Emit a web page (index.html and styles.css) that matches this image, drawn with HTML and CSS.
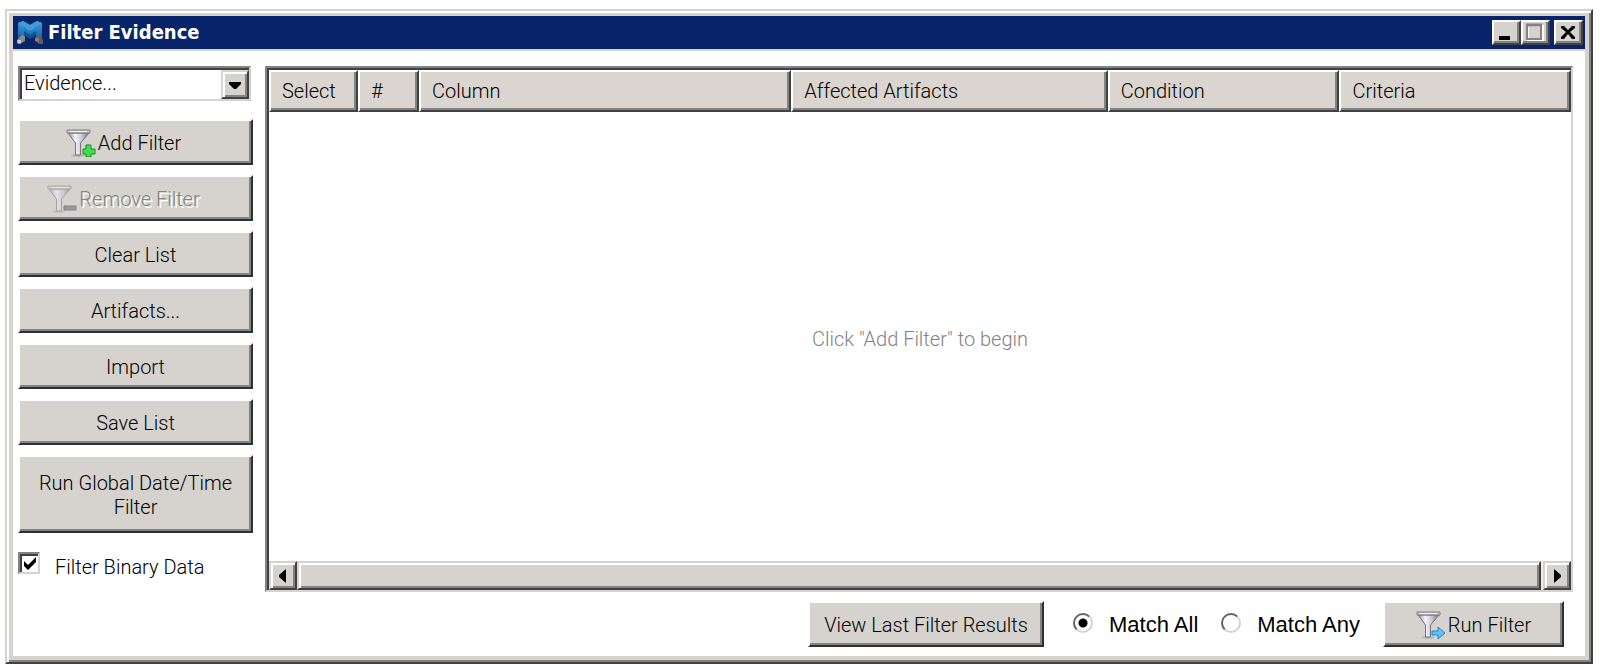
FILE: index.html
```html
<!DOCTYPE html>
<html lang="en">
<head>
<meta charset="utf-8">
<title>Filter Evidence</title>
<link rel="stylesheet" href="styles.css">
</head>
<body>
<svg class="defs" width="0" height="0" aria-hidden="true">
  <defs>
    <linearGradient id="metal" x1="0" x2="1" y1="0" y2="0">
      <stop offset="0" stop-color="#8e8c98"/><stop offset=".35" stop-color="#f6f5fb"/><stop offset=".65" stop-color="#c9c8d8"/><stop offset="1" stop-color="#77747c"/>
    </linearGradient>
    <linearGradient id="limb" x1="0" x2="0" y1="0" y2="1">
      <stop offset="0" stop-color="#3f9cda"/><stop offset=".65" stop-color="#1f74b5"/><stop offset="1" stop-color="#1a4f86"/>
    </linearGradient>
    <g id="funnel">
      <ellipse cx="12" cy="26.5" rx="7" ry="1.5" fill="#aaa7a5" opacity=".7"/>
      <path d="M2 4 9.500 14V26H14.500V14L23 4Z" fill="url(#metal)" stroke="#77737a" stroke-width="1"/>
      <path d="M1 1H24V4H1Z" fill="#c8c6cb" stroke="#827d7c" stroke-width="1"/>
      <path d="M4 2.5H21" stroke="#f4f3f6" stroke-width="1"/>
    </g>
  </defs>
</svg>
<main class="window">
  <header class="titlebar">
    <svg class="logo" viewBox="0 0 26 25" aria-hidden="true">
      <path d="M1 3 6 1 13 5 20 1 25 3V19L19 20V14L13 18 7 14V20L1 21Z" fill="url(#limb)"/>
      <path d="M1 3 6 1 13 5 20 1 25 3 13 11Z" fill="#429bd8"/>
      <path d="M7 11 13 15 19 11V15L13 19 7 15Z" fill="#145289"/>
      <path d="M0 20 5 15 8 16V21L3 24 0 23Z" fill="#8c8a88"/><path d="M0 20H4V23L1 24Z" fill="#d0ccc5"/>
      <path d="M18 17 23 15 26 20V24H22L18 21Z" fill="#5d5d62"/><path d="M18 18H22V22L18 21Z" fill="#7c7c80"/>
    </svg>
    <h1 class="title">Filter Evidence</h1>
    <div class="caption">
      <button class="cap" type="button" aria-label="Minimize"><svg viewBox="0 0 22 20"><path d="M5 14H16V18H5Z" fill="#000"/></svg></button>
      <button class="cap" type="button" aria-label="Maximize" disabled><svg viewBox="0 0 22 20"><path d="M5 4H20V18H5Z" fill="none" stroke="#fff" stroke-width="2"/><path d="M4 3H18V17H4Z" fill="none" stroke="#848284" stroke-width="2"/><path d="M3 3H19" stroke="#848284" stroke-width="3"/></svg></button>
      <button class="cap cap-close" type="button" aria-label="Close"><svg viewBox="0 0 22 20"><path d="M5 4H8L12 8 16 4H19V6L14 10 19 15V17H16L12 12 8 17H5V15L10 10 5 6Z" fill="#000"/></svg></button>
    </div>
  </header>
  <div class="content">
    <aside class="sidebar">
      <div class="combo">
        <select class="combo-field" aria-label="Evidence"><option>Evidence...</option></select>
        <span class="combo-arrow"><svg viewBox="0 0 14 8"><path d="M1 1H13V3L8 8H6L1 3Z" fill="#000"/></svg></span>
      </div>
      <button class="btn btn-side-icon" type="button"><svg class="icon" viewBox="0 0 30 28"><use href="#funnel"/><path d="M20 16H25V20H29V25H25V28H20V25H17V20H20Z" fill="#45dd50" stroke="#148c24" stroke-width="1"/></svg><span>Add Filter</span></button>
      <button class="btn btn-side-icon" type="button" disabled><svg class="icon" viewBox="0 0 30 28"><g opacity=".5"><use href="#funnel"/></g><path d="M17 21H29V25H17Z" fill="#9a989c" stroke="#848284"/></svg><span>Remove Filter</span></button>
      <button class="btn" type="button">Clear List</button>
      <button class="btn" type="button">Artifacts...</button>
      <button class="btn" type="button">Import</button>
      <button class="btn" type="button">Save List</button>
      <button class="btn btn-tall" type="button">Run Global Date/Time Filter</button>
      <label class="check"><input class="check-box" type="checkbox" checked><span>Filter Binary Data</span></label>
    </aside>
    <section class="main">
      <div class="grid">
        <div class="grid-body">
          <table class="filters">
            <colgroup><col class="c-select"><col class="c-num"><col class="c-column"><col class="c-artifacts"><col class="c-condition"><col></colgroup>
            <thead><tr><th>Select</th><th>#</th><th>Column</th><th>Affected Artifacts</th><th>Condition</th><th>Criteria</th></tr></thead>
            <tbody><tr><td class="empty" colspan="6">Click "Add Filter" to begin</td></tr></tbody>
          </table>
        </div>
        <div class="scroll">
          <button class="scroll-btn" type="button" aria-label="Scroll left"><svg viewBox="0 0 8 14"><path d="M7 0V14L0 8V6Z" fill="#000"/></svg></button>
          <div class="thumb"></div>
          <button class="scroll-btn" type="button" aria-label="Scroll right"><svg viewBox="0 0 8 14"><path d="M1 0V14L8 8V6Z" fill="#000"/></svg></button>
        </div>
      </div>
      <footer class="actions">
        <button class="btn btn-view" type="button">View Last Filter Results</button>
        <label class="radio"><input class="radio-dot" type="radio" name="match" checked><span>Match All</span></label>
        <label class="radio"><input class="radio-dot" type="radio" name="match"><span>Match Any</span></label>
        <button class="btn btn-run" type="button"><svg class="icon" viewBox="0 0 30 28"><use href="#funnel"/><path d="M16 20H22V16L29 22 22 28V24H16Z" fill="#5fc3f8" stroke="#2384cc" stroke-width="1"/></svg><span>Run Filter</span></button>
      </footer>
    </section>
  </div>
</main>
</body>
</html>
```
FILE: styles.css
```css
* { box-sizing: border-box; }
body {
  margin: 0;
  padding: 9px 7px 6px 5px;
  height: 100vh;
  background: #fff;
  color: #000;
  font: 300 20px/24px Roboto, "Liberation Sans", sans-serif;
}
button, select { font: inherit; color: inherit; margin: 0; }
.defs { position: absolute; }
.window {
  display: flex;
  flex-direction: column;
  height: 100%;
  border: 2px solid;
  border-color: #d6d3ce #424142 #424142 #d6d3ce;
  box-shadow: inset 2px 2px #fff, inset -2px -2px #848284, inset 0 0 0 6px #d6d3ce;
  padding: 5px 6px 6px;
}
.titlebar {
  display: flex;
  align-items: center;
  height: 35px;
  flex: none;
  padding: 0 2px 1px 4px;
  background: #08246b;
  border-bottom: 2px solid #d6d3ce;
}
.logo { width: 26px; height: 25px; }
.title {
  flex: 1;
  margin: 0 0 0 5px;
  color: #fff;
  font: bold 20px/24px "DejaVu Sans Condensed", "DejaVu Sans", sans-serif;
}
.caption { display: flex; }
.cap {
  width: 29px;
  height: 25px;
  padding: 0;
  background: #d6d3ce;
  border: 2px solid;
  border-color: #fff #424142 #424142 #fff;
  box-shadow: inset -2px -2px #848284;
}
.cap svg { display: block; width: 22px; height: 20px; }
.cap-close { margin-left: 4px; }
.content { flex: 1; display: flex; gap: 12px; padding: 15px 12px 9px 5px; min-height: 0; }
.sidebar { flex: none; width: 235px; display: flex; flex-direction: column; gap: 10px; }
.combo {
  position: relative;
  height: 35px;
  margin: 0 2px 8px 0;
  border: 2px solid;
  border-color: #848284 #d6d3ce #d6d3ce #848284;
}
.combo-field {
  appearance: none;
  width: 100%;
  height: 100%;
  padding: 0 32px 3px 2px;
  border: 0 solid #424142;
  border-width: 2px 0 0 2px;
  border-radius: 0;
  background: #fff;
}
.combo-arrow {
  position: absolute;
  top: 2px;
  right: 0;
  bottom: 0;
  width: 28px;
  display: flex;
  align-items: center;
  justify-content: center;
  pointer-events: none;
  background: #d6d3ce;
  border: 2px solid;
  border-color: #d6d3ce #424142 #424142 #d6d3ce;
  box-shadow: inset 2px 2px #fff, inset -2px -2px #848284;
}
.combo-arrow svg { width: 14px; height: 8px; }
.btn {
  display: flex;
  align-items: center;
  justify-content: center;
  gap: 2px;
  height: 46px;
  flex: none;
  padding: 2px 8px 0;
  text-align: center;
  background: #d6d3ce;
  border: 2px solid;
  border-color: #fff #313031 #313031 #fff;
  box-shadow: inset -2px -2px #848284;
}
.btn:disabled { color: #848284; text-shadow: 2px 2px #fff; }
.btn-side-icon { padding-right: 32px; }
.btn-tall { height: 78px; }
.icon { width: 30px; height: 28px; flex: none; }
.check { display: flex; gap: 15px; margin-top: 9px; }
.check-box {
  appearance: none;
  width: 22px;
  height: 22px;
  margin: 0;
  border: 2px solid;
  border-color: #848284 #d6d3ce #d6d3ce #848284;
  box-shadow: inset 2px 2px #424142;
  background: #fff;
}
.check-box:checked::before {
  content: "";
  display: block;
  width: 18px;
  height: 18px;
  background: #000;
  clip-path: polygon(4px 7px, 8px 11px, 16px 3px, 16px 8px, 8px 16px, 4px 12px);
}
.check span { padding-top: 3px; }
.main { flex: 1; min-width: 0; display: flex; flex-direction: column; gap: 9px; }
.grid {
  flex: 1;
  min-height: 0;
  display: flex;
  flex-direction: column;
  border: 2px solid;
  border-color: #848284 #d6d3ce #d6d3ce #848284;
  box-shadow: inset 2px 2px #424142;
  padding: 2px 0 0 2px;
}
.grid-body { flex: 1; min-height: 0; }
.filters { width: 100%; height: 100%; table-layout: fixed; border-collapse: separate; border-spacing: 0; }
.c-select { width: 89px; }
.c-num { width: 61px; }
.c-column { width: 28.6%; }
.c-artifacts { width: 24.3%; }
.c-condition { width: 17.8%; }
.filters th {
  height: 42px;
  padding: 0 0 1px 11px;
  text-align: left;
  font-weight: inherit;
  background: #dbd5d0;
  border: 2px solid;
  border-color: #fff #424142 #424142 #fff;
  box-shadow: inset -2px -2px #848284;
}
.empty { padding: 4px 0 0; text-align: center; color: #848284; }
.scroll { display: flex; height: 29px; background: #efedea; }
.scroll-btn, .thumb {
  background: #d6d3ce;
  border: 2px solid;
  border-color: #d6d3ce #424142 #424142 #d6d3ce;
  box-shadow: inset 2px 2px #fff, inset -2px -2px #848284;
}
.scroll-btn { width: 28px; padding: 0; display: flex; align-items: center; justify-content: center; }
.scroll-btn svg { width: 8px; height: 14px; }
.thumb { flex: 1; margin-right: 2px; }
.actions { display: flex; align-items: center; justify-content: flex-end; padding-right: 9px; }
.btn-view { width: 236px; margin-right: 29px; }
.radio { display: flex; align-items: center; gap: 16px; margin-right: 23px; font: 22px/24px "Liberation Sans", sans-serif; }
.radio span { padding-top: 2px; }
.radio-dot {
  appearance: none;
  width: 20px;
  height: 20px;
  margin: 0 0 2px;
  border: 2px solid;
  border-color: #636163 #d6d3ce #d6d3ce #636163;
  border-radius: 50%;
  background: #fff;
}
.radio-dot:checked { background: radial-gradient(circle, #000 4px, #fff 5px); }
.btn-run { width: 181px; }
```
